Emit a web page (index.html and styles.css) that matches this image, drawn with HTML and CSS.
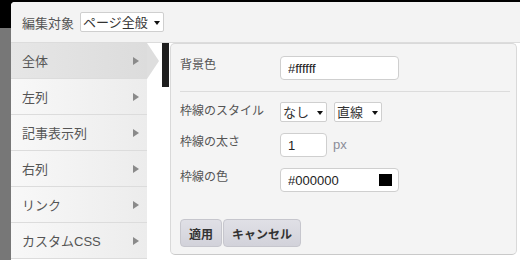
FILE: index.html
```html
<!DOCTYPE html>
<html lang=ja>
<head>
  <meta charset=utf-8>
  <title>スタイル編集</title>
  <link rel="stylesheet" href="styles.css">
</head>
<body>
  <div class=dialog>
    <div class=head>
      <span>編集対象</span>
      <span class='sel sel-target'><select><option>ページ全般</option></select></span>
    </div>

    <div class=body>
      <ul class=menu>
        <li class='item active'><span>全体</span><i class=tri></i></li>
        <li class=item><span>左列</span><i class=tri></i></li>
        <li class=item><span>記事表示列</span><i class=tri></i></li>
        <li class=item><span>右列</span><i class=tri></i></li>
        <li class=item><span>リンク</span><i class=tri></i></li>
        <li class=item><span>カスタムCSS</span><i class=tri></i></li>
      </ul>

      <div class=edge></div>

      <form class=panel>
        <div class=row>
          <label for=bg>背景色</label>
          <input id=bg class='txt wide' value='#ffffff'>
        </div>
        <hr>
        <div class=row>
          <label>枠線のスタイル</label>
          <span class='sel sel-small'><select><option>なし</option></select></span>
          <span class='sel sel-small sel-next'><select><option>直線</option></select></span>
        </div>
        <div class=row>
          <label for=bw>枠線の太さ</label>
          <input id=bw class='txt narrow' value=1>
          <span class=unit>px</span>
        </div>
        <div class=row>
          <label for=bc>枠線の色</label>
          <span class='field wide'>
            <input id=bc value='#000000'>
            <span class=swatch></span>
          </span>
        </div>
        <div class=actions>
          <button type=button class=btn>適用</button>
          <button type=button class=btn>キャンセル</button>
        </div>
      </form>
    </div>
  </div>
</body>
</html>
```

FILE: styles.css
```css
/* page behind the dialog */

body {
  margin: 0;
  height: 260px;
  overflow: hidden;
  background: linear-gradient(#000 0 28px, #777 28px);
  font-family: "Liberation Sans", "Noto Sans CJK JP", sans-serif;
}

.dialog {
  margin: 2px 0 0 11px;
  height: 258px;
  background: #fff;
  border-radius: 4px 0 0 0;
  overflow: hidden;
}

/* header with target select */

.head {
  display: flex;
  align-items: center;
  gap: 6px;
  height: 40px;
  padding: 0 11px;
  background: #f3f3f3;
  border-bottom: 1px solid #dcdcdc;
  font-size: 13px;
  color: #555;
}

.sel {
  position: relative;
  display: inline-block;
  flex: none;
}

.sel select {
  appearance: none;
  display: block;
  box-sizing: border-box;
  height: 20px;
  margin: 0;
  padding: 0 14px 0 2px;
  border: 1px solid #cfcfcf;
  border-radius: 2px;
  background: #fff;
  font: 13px "Liberation Sans", "Noto Sans CJK JP", sans-serif;
  color: #333;
}

.sel:after {
  content: '';
  position: absolute;
  right: 4px;
  top: 9px;
  border-top: 4px solid #111;
  border-left: 3.5px solid transparent;
  border-right: 3.5px solid transparent;
  pointer-events: none;
}

.sel-target select { width: 84px }
.sel-small select { width: 47px }
.sel-next { margin-left: 7px }
.sel-next select { width: 48px }

/* left menu */

.body {
  display: flex;
  align-items: flex-start;
  background: #fff;
}

.menu {
  list-style: none;
  margin: 0;
  padding: 0;
  width: 136px;
  flex: none;
}

.item {
  position: relative;
  display: flex;
  align-items: center;
  justify-content: space-between;
  height: 35px;
  padding: 0 8px 0 11px;
  border-bottom: 1px solid #dcdcdc;
  background: linear-gradient(to right, #f8f8f8, #ececec);
  font-size: 13px;
  color: #555;
}

.item.active {
  background: linear-gradient(to right, #e6e6e6, #dcdcdc);
}

.item.active:after {
  content: '';
  position: absolute;
  left: 100%;
  top: 0;
  border-left: 12px solid #dedede;
  border-top: 18px solid transparent;
  border-bottom: 18px solid transparent;
}

.tri {
  border-left: 6px solid #8a8a8a;
  border-top: 4px solid transparent;
  border-bottom: 4px solid transparent;
}

.edge {
  flex: none;
  width: 7px;
  height: 44px;
  margin-left: 15px;
  background: #1e1e1e;
}

/* settings panel */

.panel {
  flex: none;
  box-sizing: border-box;
  width: 347px;
  height: 212px;
  margin: 0 0 0 1px;
  padding: 12px 6px 0 9px;
  background: #f4f4f4;
  border: 1px solid #d9d9d9;
  border-bottom-color: #c9c9c9;
  border-radius: 5px;
}

.row {
  display: flex;
  align-items: flex-start;
}

.row + .row {
  margin-top: 11px;
}

.row label {
  flex: none;
  width: 100px;
  line-height: 18px;
  font-size: 12px;
  color: #555;
}

hr {
  margin: 11px 0 10px;
  border: 0;
  border-top: 1px solid #dcdcdc;
}

.txt,
.field {
  box-sizing: border-box;
  height: 24px;
  margin: 0;
  padding: 0 7px;
  border: 1px solid #cfcfcf;
  border-radius: 4px;
  background: #fff;
  font: 13px "Liberation Sans", "Noto Sans CJK JP", sans-serif;
  color: #222;
}

.wide { width: 119px }
.narrow { width: 47px }

.field {
  display: flex;
  align-items: center;
  padding-right: 6px;
}

.field input {
  flex: 1;
  min-width: 0;
  height: 100%;
  padding: 0;
  border: 0;
  background: none;
  font: inherit;
  color: inherit;
}

.swatch {
  flex: none;
  width: 13px;
  height: 12px;
  background: #000;
}

.unit {
  margin-left: 6px;
  line-height: 24px;
  font-size: 13px;
  color: #8a8c98;
}

/* buttons */

.actions {
  display: flex;
  gap: 1px;
  margin-top: 27px;
}

.btn {
  height: 28px;
  margin: 0;
  padding: 0 8px;
  border: 1px solid #c6c6cd;
  border-radius: 4px;
  background: linear-gradient(#e0e0e6, #d2d2da);
  font: bold 12px "Liberation Sans", "Noto Sans CJK JP", sans-serif;
  color: #333;
}
```
